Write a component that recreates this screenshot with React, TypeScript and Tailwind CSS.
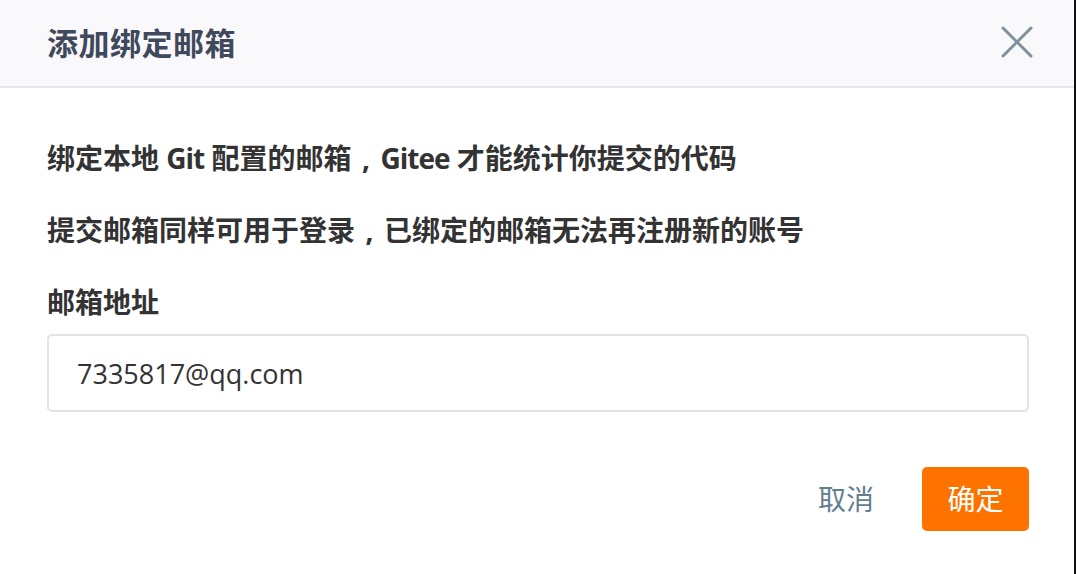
import { useState } from "react"

function Comma() {
  return <span className="px-[10.5px]">,</span>
}

function Latin({ children }: { children: string }) {
  return <span className="tracking-[-1px]">{children}</span>
}

export default function App() {
  const [email, setEmail] = useState("7335817@qq.com")

  return (
    <div
      lang="zh-CN"
      className="w-[1076px] h-[574px] bg-white border-r-2 border-[#111] overflow-hidden"
      style={{ fontFamily: '"Open Sans", "Noto Sans CJK SC", sans-serif' }}
    >
      {/* Header */}
      <div className="h-[88px] bg-[#f9f9fb] border-b-2 border-[#e6e6e6] flex items-center justify-between pl-[47px] pr-[40px]">
        <h1 className="text-[31px] font-bold text-[#40485b] leading-none tracking-[0.5px]">添加绑定邮箱</h1>
        <button className="w-[34px] h-[34px] flex items-center justify-center -mt-[2px]">
          <svg width="32" height="32" viewBox="0 0 32 32" fill="none">
            <path d="M2 2L30 30M30 2L2 30" stroke="#7f929c" strokeWidth="3" strokeLinecap="round" />
          </svg>
        </button>
      </div>

      {/* Body */}
      <div className="pl-[47px] pr-[45px] pt-[48px]">
        <div className="flex flex-col gap-[28px] text-[28px] font-bold text-[#333] leading-[44px]">
          <p>
            绑定本地 <Latin>Git</Latin> 配置的邮箱<Comma /><Latin>Gitee</Latin> 才能统计你提交的代码
          </p>
          <p>
            提交邮箱同样可用于登录<Comma />已绑定的邮箱无法再注册新的账号
          </p>
          <p>邮箱地址</p>
        </div>
        <input
          value={email}
          onChange={(e) => setEmail(e.target.value)}
          className="mt-[10px] w-full h-[78px] border-2 border-[#e3e3e3] rounded-[5px] px-[28px] text-[27px] text-[#333] outline-none"
        />

        {/* Footer */}
        <div className="mt-[55px] flex items-center justify-end">
          <button className="text-[28px] text-[#62808f] mr-[48px]">取消</button>
          <button className="w-[107px] h-[64px] rounded-[5px] bg-[#fe7300] text-white text-[28px]">确定</button>
        </div>
      </div>
    </div>
  )
}
